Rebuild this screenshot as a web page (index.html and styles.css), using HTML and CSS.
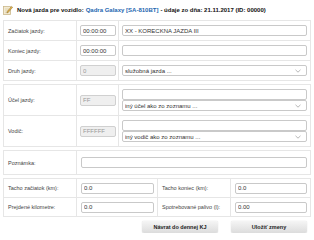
FILE: index.html
```html
<!DOCTYPE html>
<html lang="sk">
<head>
    <meta charset="UTF-8">
    <title>Nová jazda</title>
    <link rel="stylesheet" href="styles.css">
</head>
<body>
    <div class="page">
        <div class="title">
            <svg class="title-icon" width="10" height="10" viewBox="0 0 10 10">
                <rect x="0.5" y="1.5" width="7" height="8" fill="#f3ead2" stroke="#cbb98a" stroke-width="0.8"/>
                <line x1="2" y1="4" x2="6" y2="4" stroke="#d8c9a0" stroke-width="0.6"/>
                <line x1="2" y1="5.8" x2="6" y2="5.8" stroke="#d8c9a0" stroke-width="0.6"/>
                <line x1="2" y1="7.6" x2="5" y2="7.6" stroke="#d8c9a0" stroke-width="0.6"/>
                <path d="M4.2 6.6 L8.6 1.4 L9.6 2.3 L5.2 7.5 L3.9 7.9 Z" fill="#e8b64a" stroke="#8a6a2a" stroke-width="0.5"/>
            </svg>
            <span>Nová jazda pre vozidlo:</span>
            <span class="vehicle">Qadra Galaxy [SA-810BT]</span>
            <span>- údaje zo dňa: 21.11.2017 (ID: 00000)</span>
        </div>

        <table class="form-table">
            <colgroup><col class="c-label"><col class="c-code"><col></colgroup>
            <tr>
                <td class="label">Začiatok jazdy:</td>
                <td><input class="inp code" value="00:00:00"></td>
                <td><input class="inp" value="XX - KORECKNA JAZDA III"></td>
            </tr>
            <tr>
                <td class="label">Koniec jazdy:</td>
                <td><input class="inp code" value="00:00:00"></td>
                <td><input class="inp" value=""></td>
            </tr>
            <tr>
                <td class="label">Druh jazdy:</td>
                <td><input class="inp code" value="0" disabled></td>
                <td><select class="inp sel"><option>služobná jazda ...</option></select></td>
            </tr>
        </table>

        <table class="form-table tall">
            <colgroup><col class="c-label"><col class="c-code"><col></colgroup>
            <tr>
                <td class="label">Účel jazdy:</td>
                <td><input class="inp code" value="FF" disabled></td>
                <td>
                    <input class="inp" value="">
                    <select class="inp sel"><option>iný účel ako zo zoznamu ...</option></select>
                </td>
            </tr>
            <tr>
                <td class="label">Vodič:</td>
                <td><input class="inp code" value="FFFFFF" disabled></td>
                <td>
                    <input class="inp" value="">
                    <select class="inp sel"><option>iný vodič ako zo zoznamu ...</option></select>
                </td>
            </tr>
        </table>

        <table class="form-table note">
            <colgroup><col class="c-label"><col></colgroup>
            <tr>
                <td class="label">Poznámka:</td>
                <td class="wide"><input class="inp" value=""></td>
            </tr>
        </table>

        <table class="form-table tacho">
            <colgroup><col class="c-label"><col class="c-val"><col class="c-label"><col></colgroup>
            <tr>
                <td class="label">Tacho začiatok (km):</td>
                <td class="wide"><input class="inp" value="0.0"></td>
                <td class="label">Tacho koniec (km):</td>
                <td class="wide"><input class="inp" value="0.0"></td>
            </tr>
            <tr>
                <td class="label">Prejdené kilometre:</td>
                <td class="wide"><input class="inp" value="0.0"></td>
                <td class="label">Spotrebované palivo (l):</td>
                <td class="wide"><input class="inp" value="0.00"></td>
            </tr>
        </table>

        <div class="actions">
            <button class="btn">Návrat do dennej KJ</button>
            <button class="btn">Uložiť zmeny</button>
        </div>
    </div>
</body>
</html>
```

FILE: styles.css
```css
body {
    margin: 0;
    background: #fff;
    font-family: "Liberation Sans", Arial, sans-serif;
    color: #333;
}
.page {
    padding: 0 3px;
    width: 308px;
}
.title {
    height: 20px;
    display: flex;
    align-items: center;
    gap: 2px;
    font-size: 6px;
    font-weight: bold;
    color: #111;
    white-space: nowrap;
}
.title-icon {
    margin-right: 2px;
    flex: none;
}
.vehicle {
    color: #2466b0;
}
.form-table {
    width: 308px;
    border-collapse: collapse;
    table-layout: fixed;
    margin-bottom: 3px;
}
.form-table td {
    border: 1px solid #e6e6e6;
    height: 19px;
    padding: 0 3px;
    vertical-align: middle;
}
.form-table.tall td {
    height: 30px;
}
.form-table.note td {
    height: 23px;
}
.form-table.tacho td {
    height: 18px;
}
.c-label { width: 73px; }
.c-code { width: 42px; }
.c-val { width: 81px; }
.form-table td.label {
    font-size: 5.5px;
    color: #444;
    padding-left: 4px;
}
.form-table td.wide {
    padding: 0 3px 0 4px;
}
.inp {
    display: block;
    box-sizing: border-box;
    width: 100%;
    height: 11px;
    margin: 0;
    padding: 0 2px;
    border: 1px solid #c9c9c9;
    border-radius: 2px;
    background: #fff;
    font-family: "Liberation Sans", Arial, sans-serif;
    font-size: 6px;
    color: #333;
    outline: none;
}
.inp.code {
    width: 36px;
}
.inp:disabled {
    background: #efefef;
    color: #999;
    border-color: #d0d0d0;
}
.sel {
    appearance: none;
    -webkit-appearance: none;
    padding-right: 12px;
    background: #fff url("data:image/svg+xml;utf8,<svg xmlns='http://www.w3.org/2000/svg' width='6' height='4' viewBox='0 0 6 4'><path d='M0.5 0.8 L3 3.2 L5.5 0.8' fill='none' stroke='%23999' stroke-width='0.7'/></svg>") no-repeat right 5px center;
}
.actions {
    display: flex;
    justify-content: flex-end;
    gap: 13px;
    padding: 1px 4px 0 0;
}
.btn {
    width: 76px;
    height: 12px;
    padding: 0;
    border: none;
    border-radius: 2px;
    background: linear-gradient(#f5f5f5, #dcdcdc);
    box-shadow: 0 0 1px rgba(0,0,0,0.25);
    font-family: "Liberation Sans", Arial, sans-serif;
    font-size: 5.5px;
    font-weight: bold;
    color: #222;
    cursor: pointer;
}
```
